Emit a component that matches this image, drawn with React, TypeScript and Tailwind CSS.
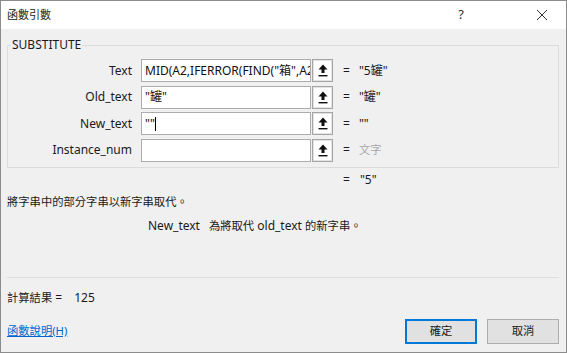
import React from 'react';

const font = { fontFamily: '"Noto Sans", "Noto Sans CJK TC", sans-serif' };

// CJK glyphs in the reference run a little narrower than the Latin text size
function Cjk({ children }: { children: React.ReactNode }) {
  return <span className="text-[11.3px]">{children}</span>;
}

function RefButton() {
  return (
    <div className="ml-[1px] w-[21px] h-[23px] border border-[#a5a5a5] bg-white shadow-[inset_0_0_0_1px_#e3e3e3] flex items-center justify-center">
      <svg width="10" height="13" viewBox="0 0 10 13">
        <path d="M5 0.5 L9.5 5.5 L6.5 5.5 L6.5 9 L3.5 9 L3.5 5.5 L0.5 5.5 Z" fill="#111" />
        <rect x="0.5" y="11" width="9" height="1.4" fill="#111" />
      </svg>
    </div>
  );
}

interface ArgRowProps {
  label: string;
  value: React.ReactNode;
  result: React.ReactNode;
  muted?: boolean;
}

function ArgRow({ label, value, result, muted }: ArgRowProps) {
  return (
    <div className="flex items-center h-[23px]">
      <div className="w-[124px] text-right text-[12px] text-[#1a1a1a]">{label}</div>
      <div className="ml-[9px] w-[170px] h-[23px] border border-[#acacac] bg-white flex items-center px-[3px] overflow-hidden whitespace-nowrap text-[12px] text-[#111]">
        {value}
      </div>
      <RefButton />
      <div className="ml-[10px] text-[12px] text-[#1a1a1a]">=</div>
      <div className={`ml-[9px] text-[12px] whitespace-nowrap ${muted ? 'text-[#a8a8a8]' : 'text-[#1a1a1a]'}`}>
        {result}
      </div>
    </div>
  );
}

export default function App() {
  return (
    <div
      className="w-[567px] h-[353px] border border-[#8c8c8c] bg-[#f0f0f0] flex flex-col overflow-hidden"
      style={font}
    >
      <div className="h-[28px] bg-white flex items-center pl-[6px] shrink-0">
        <span className="text-[11px] text-[#1a1a1a]">函數引數</span>
        <span className="ml-auto text-[13px] text-[#333] mr-[72px]">?</span>
        <svg width="12" height="12" viewBox="0 0 12 12" className="mr-[18px]">
          <path d="M1 1 L11 11 M11 1 L1 11" stroke="#333" strokeWidth="1" />
        </svg>
      </div>

      <div className="flex flex-col pl-[6px] pr-[7px] pt-[8px] text-[#1a1a1a]">
        <fieldset className="border border-[#dcdcdc] h-[131px] px-0 pb-[5px]">
          <legend className="ml-[3px] px-[1px] text-[12px] leading-[16px]">SUBSTITUTE</legend>
          <div className="flex flex-col gap-[3.5px] mt-[6px]">
            <ArgRow label="Text" value={'MID(A2,IFERROR(FIND("箱",A2'} result={'"5罐"'} />
            <ArgRow label="Old_text" value={'"罐"'} result={'"罐"'} />
            <ArgRow
              label="New_text"
              value={
                <>
                  <span>""</span>
                  <span className="inline-block w-[1px] h-[14px] bg-black" />
                </>
              }
              result={'""'}
            />
            <ArgRow label="Instance_num" value="" result={<Cjk>文字</Cjk>} muted />
          </div>
        </fieldset>

        <div className="mt-[4px] h-[16px] leading-[16px] text-[12px] flex pl-[336px]">
          <span>=</span>
          <span className="ml-[10px]">"5"</span>
        </div>
        <div className="mt-[4px] h-[16px] leading-[16px]">
          <Cjk>將字串中的部分字串以新字串取代。</Cjk>
        </div>
        <div className="mt-[10px] h-[16px] leading-[16px] text-[12px] pl-[141px] flex items-baseline">
          <span>New_text</span>
          <span className="ml-[9px]">
            <Cjk>為將取代</Cjk> old_text <Cjk>的新字串。</Cjk>
          </span>
        </div>

        <div className="mt-[43px] border-t border-[#dedede]" />

        <div className="mt-[12px] h-[16px] leading-[16px] text-[12px] flex items-baseline">
          <span>
            <Cjk>計算結果</Cjk> =
          </span>
          <span className="ml-[12px]">125</span>
        </div>

        <div className="mt-[13px] flex items-center">
          <a href="#" className="text-[11.3px] text-[#0066cc] underline">函數說明(H)</a>
          <button className="ml-auto w-[72px] h-[25px] border border-[#0078d7] shadow-[inset_0_0_0_1px_#0078d7] bg-[#e1e1e1] text-[11.3px] text-[#1a1a1a]">
            確定
          </button>
          <button className="ml-[10px] w-[72px] h-[25px] border border-[#adadad] bg-[#e1e1e1] text-[11.3px] text-[#1a1a1a]">
            取消
          </button>
        </div>
      </div>
    </div>
  );
}
